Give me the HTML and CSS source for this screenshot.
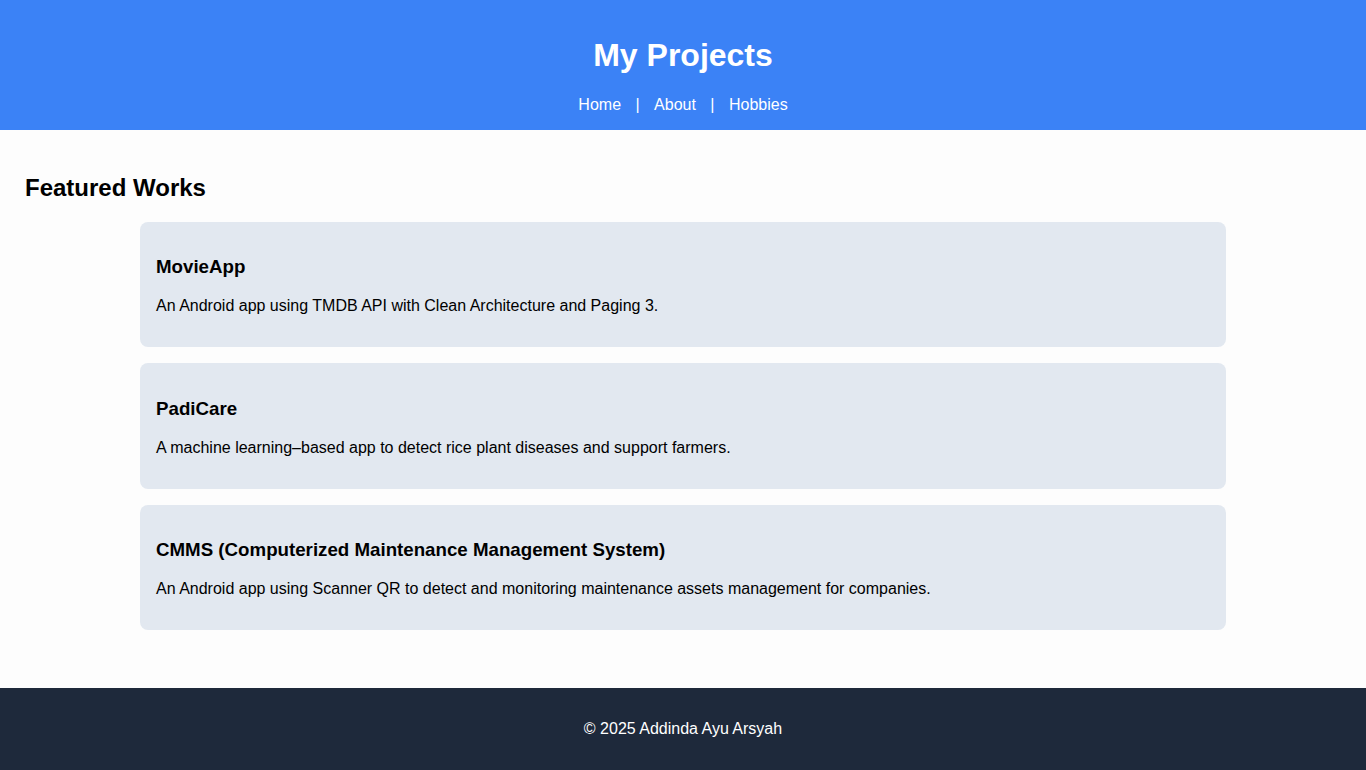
FILE: index.html
```html
<!DOCTYPE html>
<html lang="en">
<head>
<meta charset="UTF-8">
<title>My Projects</title>
<link rel="stylesheet" href="styles.css">
</head>
<body>
<header class="site-header">
  <h1 class="site-title">My Projects</h1>
  <nav class="site-nav">
    <a href="#">Home</a> | <a href="#">About</a> | <a href="#">Hobbies</a>
  </nav>
</header>
<main class="content">
  <h2 class="section-title">Featured Works</h2>
  <div class="project-list">
    <article class="project-card">
      <h3>MovieApp</h3>
      <p>An Android app using TMDB API with Clean Architecture and Paging 3.</p>
    </article>
    <article class="project-card">
      <h3>PadiCare</h3>
      <p>A machine learning–based app to detect rice plant diseases and support farmers.</p>
    </article>
    <article class="project-card">
      <h3>CMMS (Computerized Maintenance Management System)</h3>
      <p>An Android app using Scanner QR to detect and monitoring maintenance assets management for companies.</p>
    </article>
  </div>
</main>
<footer class="site-footer">
  <p>© 2025 Addinda Ayu Arsyah</p>
</footer>
</body>
</html>
```

FILE: styles.css
```css
html, body {
  margin: 0;
  padding: 0;
}

body {
  font-family: "Liberation Sans", Arial, sans-serif;
  background: #fdfdfd;
  color: #000;
  min-height: 100vh;
  display: flex;
  flex-direction: column;
}

.site-header {
  background: #3b82f6;
  color: #fff;
  text-align: center;
  padding: 16px;
}

.site-title {
  font-size: 32px;
  margin: 21.44px 0;
}

.site-nav {
  font-size: 16px;
  color: #fff;
}

.site-nav a {
  color: #fff;
  text-decoration: none;
  margin: 0 10px;
}

.content {
  flex: 1;
  padding: 24px 25px 25px;
}

.section-title {
  font-size: 24px;
  margin: 19.92px 0;
}

.project-list {
  display: flex;
  flex-direction: column;
  gap: 16px;
}

.project-card {
  box-sizing: border-box;
  background: #e2e8f0;
  border-radius: 8px;
  padding: 16px;
  width: 1086px;
  max-width: 100%;
  margin: 0 auto;
}

.project-card h3 {
  font-size: 18.72px;
  margin: 18.72px 0;
}

.project-card p {
  font-size: 16px;
  margin: 16px 0;
}

.site-footer {
  background: #1e293b;
  color: #fff;
  text-align: center;
  padding: 16px;
}

.site-footer p {
  margin: 16px 0;
}
```
